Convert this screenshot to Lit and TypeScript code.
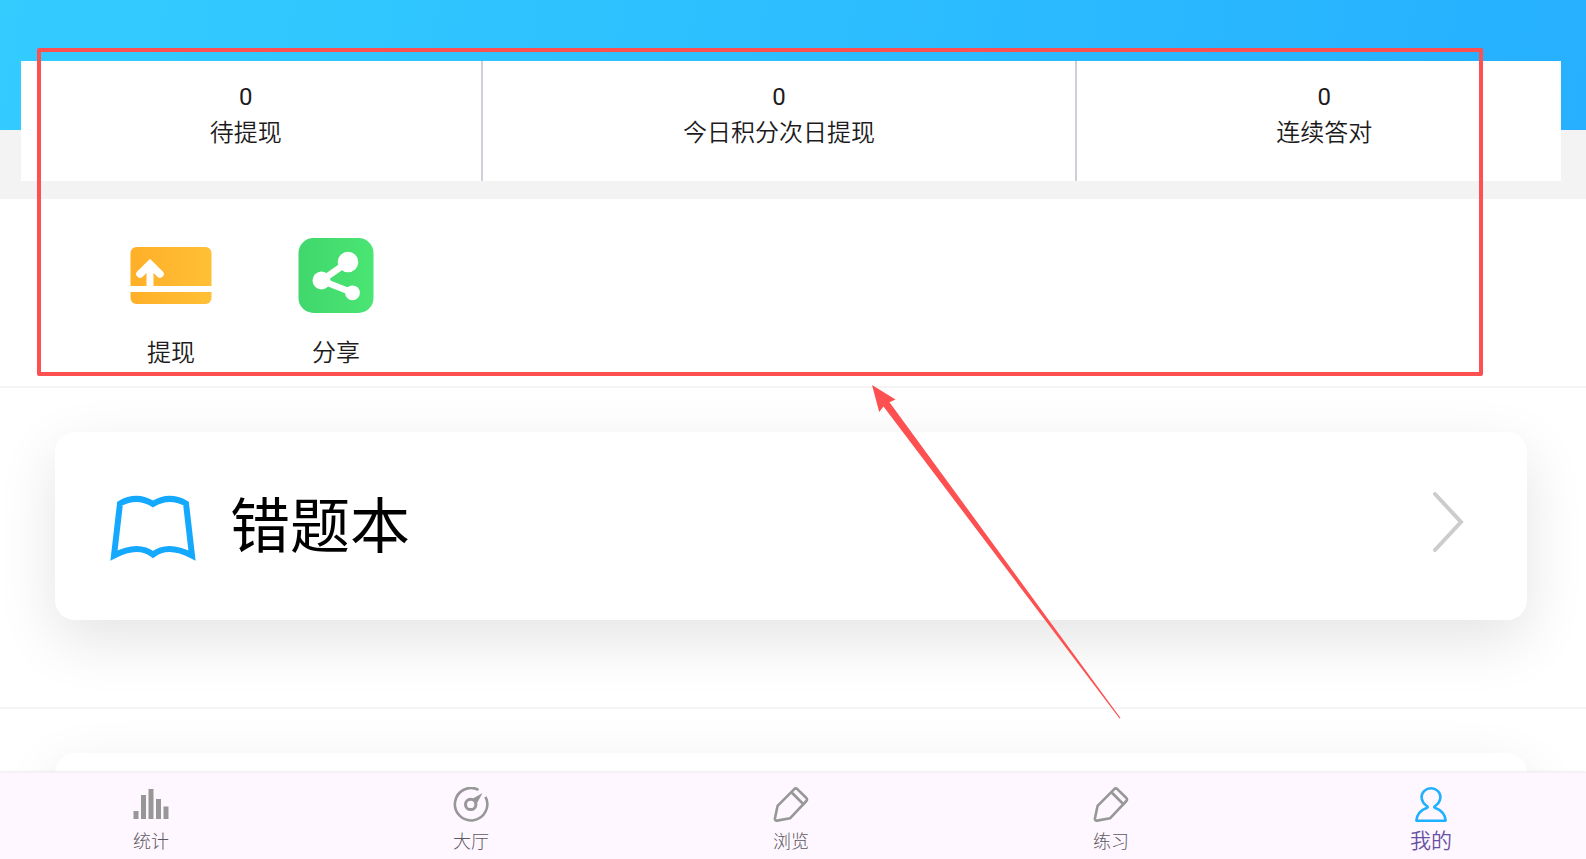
import { LitElement, html, css, svg } from "lit";
import { customElement, state } from "lit/decorators.js";
import { classMap } from "lit/directives/class-map.js";

const withdrawIcon = svg`
  <svg viewBox="0 0 84 84" width="84" height="84" aria-hidden="true">
    <defs>
      <linearGradient id="amber" x1="0" x2="1" y1="0" y2="0">
        <stop offset="0" stop-color="#ffaf28" />
        <stop offset="1" stop-color="#ffc036" />
      </linearGradient>
    </defs>
    <rect x="1.5" y="13" width="81" height="57" rx="6" fill="url(#amber)" />
    <path d="M0 52h84v6H0z" fill="#fff" />
    <path d="M21 53V33" stroke="#fff" stroke-width="7" />
    <path d="M11 40l10-9.500 10 9.500" fill="none" stroke="#fff" stroke-width="7.500" stroke-linecap="round" />
    <path d="M21 25l7 7H14z" fill="#fff" />
  </svg>`;

const shareIcon = svg`
  <svg viewBox="0 0 84 84" width="84" height="84" aria-hidden="true">
    <defs>
      <linearGradient id="leaf" x1="0" x2="1" y1="0" y2="0">
        <stop offset="0" stop-color="#40d76c" />
        <stop offset="1" stop-color="#4ae573" />
      </linearGradient>
    </defs>
    <rect x="4.5" y="4" width="75" height="75" rx="15" fill="url(#leaf)" />
    <path d="M54 28L27.5 46.500l30.500 12" fill="none" stroke="#fff" stroke-width="6.500" />
    <circle cx="54" cy="28" r="10.300" fill="#fff" />
    <circle cx="27.500" cy="46.500" r="9" fill="#fff" />
    <circle cx="58.500" cy="58.800" r="7.400" fill="#fff" />
  </svg>`;

const bookIcon = svg`
  <svg viewBox="0 0 86 66" width="86" height="66" aria-hidden="true">
    <path d="M10 8.500Q27-1 43 9Q59-1 76 8.500L82 60.500Q58 48 43 59.500Q28 48 4 60.500Z"
      fill="none" stroke="#14a9ff" stroke-width="6" stroke-miterlimit="8" />
  </svg>`;

const barsIcon = svg`
  <svg viewBox="0 0 36 36" width="36" height="36" aria-hidden="true">
    <path fill="#979797" d="M.5 24h5v8h-5zM8 8h5v24H8zM15.500 2h5v30h-5zM23 12h5v20h-5zM30.500 19.500h5V32h-5z" />
  </svg>`;

const gaugeIcon = svg`
  <svg viewBox="0 0 36 36" width="36" height="36" aria-hidden="true">
    <g fill="none" stroke="#979797" stroke-width="2.600">
      <path d="M25.500 2.800A16.200 16.200 0 1 0 32.500 9.800" />
      <circle cx="17.700" cy="17.400" r="5.200" stroke-width="3" />
    </g>
    <path d="M29.500 6L19 12l4.600 5z" fill="#979797" />
  </svg>`;

const pencilIcon = svg`
  <svg viewBox="0 0 36 36" width="36" height="36" aria-hidden="true">
    <g fill="none" stroke="#979797" stroke-width="2.600" stroke-linejoin="round">
      <path d="M4.600 18.800L21.300 2.100q1.500-1.300 3 0L33.400 11q1.200 1.500 0 3L17 31.300L4.200 33.600q-2.400.3-2.300-2z" />
      <path d="M18.700 5.500l11 11" />
    </g>
  </svg>`;

const personIcon = svg`
  <svg viewBox="0 0 36 36" width="36" height="36" aria-hidden="true">
    <path d="M14.500 19.500C10 16.500 8.600 13.500 8.600 10a9.400 8.700 0 0 1 18.800 0c0 3.500-1.400 6.500-5.900 9.500q-.4 1 .8 1.500C28 23 31.800 26 32.600 33.400q0 .4-.6.400H4q-.6 0-.6-.4C4.200 26 8 23 13.700 21q1.200-.5.8-1.500z"
      fill="none" stroke="#1fb0ff" stroke-width="2.600" />
  </svg>`;

const chevronIcon = svg`
  <svg viewBox="0 0 32 74" width="32" height="74" aria-hidden="true">
    <path d="M3 3l26 28L3 59" fill="none" stroke="#ccc" stroke-width="4" stroke-linecap="round" />
  </svg>`;

@customElement("app-root")
export class AppRoot extends LitElement {
  @state() private tab = "我的";

  private stats = [
    { value: 0, label: "待提现" },
    { value: 0, label: "今日积分次日提现" },
    { value: 0, label: "连续答对" },
  ];

  private actions = [
    { label: "提现", icon: withdrawIcon },
    { label: "分享", icon: shareIcon },
  ];

  private tabs = [
    { label: "统计", icon: barsIcon },
    { label: "大厅", icon: gaugeIcon },
    { label: "浏览", icon: pencilIcon },
    { label: "练习", icon: pencilIcon },
    { label: "我的", icon: personIcon },
  ];

  static styles = css`
    :host {
      display: flex;
      flex-direction: column;
      position: relative;
      height: 100vh;
      overflow: hidden;
      background: #fff;
      color: #1d1b20;
      font-family: Roboto, "Noto Sans CJK SC", sans-serif;
      font-size: 24px;
      line-height: 36px;
    }
    * {
      box-sizing: border-box;
    }
    svg {
      display: block;
      flex: none;
    }
    a {
      color: inherit;
      text-decoration: none;
    }
    button {
      border: 0;
      padding: 0;
      background: none;
      color: inherit;
      font: inherit;
      cursor: pointer;
    }
    main {
      flex: 1;
      min-height: 0;
      overflow: hidden;
    }
    .hero {
      padding: 61px 25px 18px 21px;
      background: linear-gradient(100deg, #33ccff, #26b0ff) 0 0 / 100% 130px no-repeat, #f3f3f3;
    }
    .stats {
      display: flex;
      justify-content: space-evenly;
      background: #fff;
      height: 120px;
    }
    .stat {
      padding-top: 18px;
      text-align: center;
    }
    .stat p {
      margin: 0;
    }
    .stat .label,
    .action .label,
    .active .label {
      font-weight: 350;
    }
    .rule {
      width: 24px;
      display: flex;
      justify-content: center;
    }
    .rule::before {
      content: "";
      width: 2px;
      background: #d2ced9;
    }
    .actions {
      display: flex;
      gap: 81px;
      padding: 35px 129px 15px;
    }
    .action {
      display: flex;
      flex-direction: column;
      align-items: center;
      gap: 17px;
      width: 84px;
    }
    .row {
      position: relative;
      overflow: hidden;
      border-top: 2px solid #f4f4f4;
      padding: 44px 59px 87px 55px;
      background: #fff;
    }
    .card {
      display: flex;
      align-items: center;
      height: 188px;
      padding: 4px 63px 0 55px;
      border-radius: 20px;
      background: #fff;
      box-shadow: 0 20px 60px rgba(0, 0, 0, 0.11);
      color: #000;
      font-size: 60px;
      line-height: 84px;
    }
    .card .title {
      flex: 1;
      padding-left: 34px;
    }
    nav {
      position: relative;
      display: flex;
      justify-content: space-between;
      padding: 14px 95px 4px 91px;
      border-top: 1px solid #f5f0f7;
      background: #fef7ff;
      box-shadow: 0 0 3px rgba(0, 0, 0, 0.1);
    }
    .tab {
      display: flex;
      flex-direction: column;
      align-items: center;
      gap: 5px;
      width: 120px;
      color: #5d5862;
      font-size: 18px;
      font-weight: 300;
      line-height: 27px;
    }
    .tab.active {
      color: #6750a4;
      font-size: 21px;
    }
    .frame {
      position: absolute;
      top: 48px;
      left: 37px;
      right: 103px;
      height: 328px;
      border: 4px solid #fd5151;
      border-radius: 2px;
      pointer-events: none;
    }
    .pointer {
      position: absolute;
      top: 384px;
      left: 55%;
      pointer-events: none;
    }
  `;

  render() {
    return html`
      <main>
        <section class="hero">
          <div class="stats">
            ${this.stats.map(
              (s, i) => html`
                ${i ? html`<div class="rule"></div>` : ""}
                <div class="stat">
                  <p>${s.value}</p>
                  <p class="label">${s.label}</p>
                </div>
              `
            )}
          </div>
        </section>
        <section class="actions">
          ${this.actions.map(
            (a) => html`<button class="action" type="button">${a.icon}<span class="label">${a.label}</span></button>`
          )}
        </section>
        <div class="row">
          <a class="card" href="#mistakes">
            ${bookIcon}<span class="title">错题本</span>${chevronIcon}
          </a>
        </div>
        <div class="row">
          <div class="card"></div>
        </div>
      </main>
      <nav>
        ${this.tabs.map(
          (t) => html`<a
            href="#"
            class=${classMap({ tab: true, active: t.label === this.tab })}
            @click=${(e: Event) => {
              e.preventDefault();
              this.tab = t.label;
            }}
            >${t.icon}<span class="label">${t.label}</span></a
          >`
        )}
      </nav>
      <div class="frame"></div>
      <svg class="pointer" viewBox="0 0 250 336" width="250" height="336" aria-hidden="true">
        <path fill="#fd5151" d="M0 1L23.500 15.500L17.500 18.300L248.500 334L247.500 334.500L11.500 22.500L7.200 28Z" />
      </svg>
    `;
  }
}
